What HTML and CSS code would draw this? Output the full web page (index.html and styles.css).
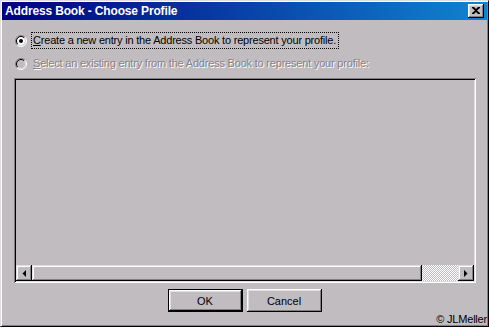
FILE: index.html
```html
<!DOCTYPE html>
<html lang="en">
<head>
    <meta charset="UTF-8">
    <title>Address Book - Choose Profile</title>
    <link rel="stylesheet" href="styles.css">
</head>
<body>
    <div class="window">
        <div class="titlebar">
            <span class="title">Address Book - Choose Profile</span>
            <button class="close-btn" title="Close">
                <svg width="8" height="7" viewBox="0 0 8 7">
                    <path d="M0 0h2l2 2 2-2h2v1L5 3.5 8 6v1H6L4 5 2 7H0V6l3-2.5L0 1z" fill="#000"/>
                </svg>
            </button>
        </div>
        <div class="content">
            <label class="option">
                <svg class="radio" width="12" height="12" viewBox="0 0 12 12">
                    <circle cx="6" cy="6" r="4" fill="#fff"/>
                    <path d="M2.1 9.9A5.5 5.5 0 0 1 9.9 2.1" stroke="#808080" fill="none"/>
                    <path d="M9.9 2.1A5.5 5.5 0 0 1 2.1 9.9" stroke="#fff" fill="none"/>
                    <path d="M2.8 9.2A4.5 4.5 0 0 1 9.2 2.8" stroke="#000" fill="none"/>
                    <path d="M9.2 2.8A4.5 4.5 0 0 1 2.8 9.2" stroke="#dfdfdf" fill="none"/>
                    <circle cx="6" cy="6" r="2" fill="#000"/>
                </svg>
                <span class="label focused"><u>C</u>reate a new entry in the Address Book to represent your profile.</span>
            </label>
            <label class="option disabled">
                <svg class="radio" width="12" height="12" viewBox="0 0 12 12">
                    <path d="M2.1 9.9A5.5 5.5 0 0 1 9.9 2.1" stroke="#808080" fill="none"/>
                    <path d="M9.9 2.1A5.5 5.5 0 0 1 2.1 9.9" stroke="#fff" fill="none"/>
                    <path d="M2.8 9.2A4.5 4.5 0 0 1 9.2 2.8" stroke="#000" fill="none"/>
                    <path d="M9.2 2.8A4.5 4.5 0 0 1 2.8 9.2" stroke="#dfdfdf" fill="none"/>
                </svg>
                <span class="label"><u>S</u>elect an existing entry from the Address Book to represent your profile:</span>
            </label>

            <div class="listbox">
                <div class="list-area"></div>
                <div class="hscroll">
                    <button class="arrow">
                        <svg width="4" height="7" viewBox="0 0 4 7"><polygon points="4,0 0.5,3.5 4,7" fill="#000"/></svg>
                    </button>
                    <div class="thumb"></div>
                    <div class="track"></div>
                    <button class="arrow">
                        <svg width="4" height="7" viewBox="0 0 4 7"><polygon points="0,0 3.5,3.5 0,7" fill="#000"/></svg>
                    </button>
                </div>
            </div>

            <div class="buttons">
                <button class="btn default">OK</button>
                <button class="btn">Cancel</button>
            </div>
            <div class="credit">&copy; JLMeller</div>
        </div>
    </div>
</body>
</html>
```

FILE: styles.css
```css
* {
    margin: 0;
    padding: 0;
    box-sizing: border-box;
}

body {
    background: #c0bcc0;
    font-family: 'Liberation Sans', Arial, sans-serif;
    font-size: 11px;
    color: #000;
}

.window {
    width: 489px;
    height: 327px;
    background: #c0bcc0;
    border: 1px solid;
    border-color: #dfdfdf #000 #000 #dfdfdf;
    box-shadow: inset 1px 1px #fff, inset -1px -1px #808080;
    padding: 1px;
}

.titlebar {
    height: 18px;
    background: linear-gradient(90deg, #000080, #1084d0);
    display: flex;
    align-items: center;
    justify-content: space-between;
    padding: 0 3px 0 3px;
}

.title {
    color: #fff;
    font-family: 'Liberation Sans', Arial, sans-serif;
    font-weight: bold;
    font-size: 12px;
    letter-spacing: -0.15px;
}

.close-btn {
    width: 16px;
    height: 14px;
    background: #c0bcc0;
    border: none;
    box-shadow: inset -1px -1px #000, inset 1px 1px #fff, inset -2px -2px #808080, inset 2px 2px #dfdfdf;
    display: flex;
    align-items: center;
    justify-content: center;
    padding-bottom: 1px;
}

.content {
    padding: 12px 11px 0 12px;
}

.option {
    display: flex;
    align-items: center;
    height: 17px;
    margin-bottom: 6px;
}

.radio {
    margin-left: 1px;
    margin-right: 4px;
}

.label {
    padding: 1px 2px 1px 1px;
    border: 1px dotted transparent;
    line-height: 13px;
    letter-spacing: -0.2px;
}

.label.focused {
    border-color: #000;
}

.disabled .label {
    color: #868286;
    text-shadow: 1px 1px #fff;
}

.listbox {
    width: 462px;
    height: 205px;
    padding: 2px;
    box-shadow: inset 1px 1px #808080, inset -1px -1px #fff, inset 2px 2px #000, inset -2px -2px #dfdfdf;
    display: flex;
    flex-direction: column;
}

.list-area {
    flex: 1;
}

.hscroll {
    height: 16px;
    display: flex;
}

.arrow {
    width: 16px;
    height: 16px;
    background: #c0bcc0;
    border: none;
    box-shadow: inset -1px -1px #000, inset 1px 1px #dfdfdf, inset -2px -2px #808080, inset 2px 2px #fff;
    display: flex;
    align-items: center;
    justify-content: center;
}

.thumb {
    width: 390px;
    height: 16px;
    box-shadow: inset -1px -1px #000, inset 1px 1px #dfdfdf, inset -2px -2px #808080, inset 2px 2px #fff;
}

.track {
    flex: 1;
    background: repeating-conic-gradient(#fff 0 25%, #c0bcc0 0 50%) 0 0 / 2px 2px;
}

.buttons {
    display: flex;
    justify-content: center;
    gap: 4px;
    margin-top: 6px;
    margin-left: -12px;
    margin-right: -11px;
}

.btn {
    width: 75px;
    height: 23px;
    background: #c0bcc0;
    border: none;
    font-family: 'Liberation Sans', Arial, sans-serif;
    font-size: 11px;
    color: #000;
    box-shadow: inset -1px -1px #000, inset 1px 1px #fff, inset -2px -2px #808080, inset 2px 2px #dfdfdf;
}

.btn.default {
    border: 1px solid #000;
}

.credit {
    text-align: right;
    margin-right: -11px;
    margin-top: 1px;
    line-height: 13px;
    font-size: 11px;
    letter-spacing: -0.2px;
}
```
